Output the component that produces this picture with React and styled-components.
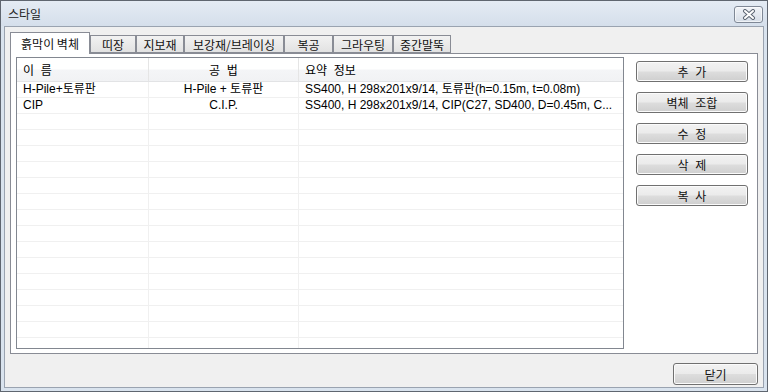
import React from "react";
import styled, { createGlobalStyle } from "styled-components";

const tabs = [
	{ label: "흙막이 벽체", width: 80 },
	{ label: "띠장", width: 46 },
	{ label: "지보재", width: 48 },
	{ label: "보강재/브레이싱", width: 100 },
	{ label: "복공", width: 49 },
	{ label: "그라우팅", width: 60 },
	{ label: "중간말뚝", width: 58 },
];

// the summary column is already cut in the source dialog
const rows = [
	["H-Pile+토류판", "H-Pile + 토류판", "SS400, H 298x201x9/14, 토류판(h=0.15m, t=0.08m)"],
	["CIP", "C.I.P.", "SS400, H 298x201x9/14, CIP(C27, SD400, D=0.45m, C..."],
];

const actions = ["추 가", "벽체 조합", "수 정", "삭 제", "복 사"];

const EMPTY_ROWS = 16;

function App() {
	const filled = [...rows];
	while (filled.length < rows.length + EMPTY_ROWS) filled.push(["", "", ""]);

	return (
		<>
			<GlobalStyle />
			<Window>
				<TitleBar>
					<Title>스타일</Title>
					<CloseX>
						<svg width="14" height="11" viewBox="0 0 14 11">
							<path d="M3 2 L11 9 M11 2 L3 9" stroke="#5d6673" strokeWidth="4" strokeLinecap="round" />
							<path d="M3 2 L11 9 M11 2 L3 9" stroke="#ffffff" strokeWidth="2" strokeLinecap="round" />
						</svg>
					</CloseX>
				</TitleBar>

				<Body>
					<TabStrip>
						{tabs.map((t, i) => (
							<Tab key={t.label} $w={t.width} $active={i === 0}>
								{t.label}
							</Tab>
						))}
					</TabStrip>

					<Panel>
						<ListView>
							<HeaderRow>
								<HeadCell $w={132}>이 름</HeadCell>
								<HeadCell $w={150} $center>
									공 법
								</HeadCell>
								<HeadCell $last>요약 정보</HeadCell>
							</HeaderRow>
							{filled.map((r, i) => (
								<Row key={i}>
									<Cell $w={132}>{r[0]}</Cell>
									<Cell $w={150} $center>
										{r[1]}
									</Cell>
									<Cell $last>{r[2]}</Cell>
								</Row>
							))}
						</ListView>

						<ButtonColumn>
							{actions.map((a) => (
								<Button key={a}>{a}</Button>
							))}
						</ButtonColumn>
					</Panel>

					<Footer>
						<Button $w={85} $h={22}>
							닫기
						</Button>
					</Footer>
				</Body>
			</Window>
		</>
	);
}

export default App;

const GlobalStyle = createGlobalStyle`
	html, body {
		margin: 0;
		padding: 0;
		background: #ffffff;
	}
	body {
		font-family: "Liberation Sans", "Noto Sans CJK KR", sans-serif;
		font-size: 12px;
		color: #000;
	}
`;

const Window = styled.div`
	width: 768px;
	height: 392px;
	box-sizing: border-box;
	border: 1px solid #5f6670;
	background: #d9e3ee;
	display: flex;
	flex-direction: column;
	overflow: hidden;
`;

const TitleBar = styled.div`
	height: 25px;
	flex-shrink: 0;
	display: flex;
	align-items: center;
	justify-content: space-between;
	padding: 0 4px 0 7px;
	background: linear-gradient(#e4ebf4, #d5dfeb);
`;

const Title = styled.span`
	font-family: "Noto Sans CJK KR", sans-serif;
	font-size: 12px;
	color: #222;
	margin-top: -1px;
`;

const CloseX = styled.div`
	width: 29px;
	height: 17px;
	box-sizing: border-box;
	margin-top: 1px;
	border: 1px solid #7f8896;
	border-radius: 3px;
	background: linear-gradient(#f1f4f8, #d6dde7);
	box-shadow: inset 0 0 0 1px rgba(255, 255, 255, 0.6);
	display: flex;
	align-items: center;
	justify-content: center;
`;

const Body = styled.div`
	flex: 1;
	margin: 0 3px 3px 3px;
	border: 1px solid #9aa3b0;
	background: #f0f0f0;
	display: flex;
	flex-direction: column;
	padding: 4px 5px 0 5px;
	min-height: 0;
`;

const TabStrip = styled.div`
	height: 22px;
	flex-shrink: 0;
	display: flex;
	align-items: flex-end;
	position: relative;
	z-index: 1;
`;

const Tab = styled.div`
	width: ${({ $w }) => $w}px;
	height: ${({ $active }) => ($active ? 22 : 18)}px;
	box-sizing: border-box;
	border: 1px solid #898c95;
	border-bottom: ${({ $active }) => ($active ? "none" : "1px solid #898c95")};
	margin-bottom: ${({ $active }) => ($active ? -1 : 0)}px;
	background: ${({ $active }) =>
		$active ? "#ffffff" : "linear-gradient(#f2f2f2, #e2e2e2)"};
	display: flex;
	align-items: center;
	justify-content: center;
	padding-top: ${({ $active }) => ($active ? 0 : 1)}px;
	white-space: nowrap;
	font-family: "Noto Sans CJK KR", sans-serif;
	font-size: 12px;
	color: #111;
`;

const Panel = styled.div`
	flex: 1;
	min-height: 0;
	border: 1px solid #898c95;
	background: #ffffff;
	display: flex;
	gap: 12px;
	padding: 3px 9px 4px 5px;
`;

const ListView = styled.div`
	width: 608px;
	box-sizing: border-box;
	border: 1px solid #828790;
	display: flex;
	flex-direction: column;
	overflow: hidden;
`;

const HeaderRow = styled.div`
	height: 24px;
	flex-shrink: 0;
	box-sizing: border-box;
	display: flex;
	border-bottom: 1px solid #e2e3e5;
	background: linear-gradient(#ffffff 0%, #ffffff 48%, #f4f5f7 52%, #f1f2f4 100%);
`;

const HeadCell = styled.div`
	${({ $w }) => ($w ? `width: ${$w}px;` : "flex: 1;")}
	box-sizing: border-box;
	border-right: ${({ $last }) => ($last ? "none" : "1px solid #e5e5e5")};
	display: flex;
	align-items: center;
	justify-content: ${({ $center }) => ($center ? "center" : "flex-start")};
	padding-left: ${({ $center }) => ($center ? 0 : 6)}px;
	font-family: "Noto Sans CJK KR", sans-serif;
	word-spacing: 4px;
	white-space: pre;
`;

const Row = styled.div`
	height: 16px;
	flex-shrink: 0;
	box-sizing: border-box;
	display: flex;
	border-bottom: 1px solid #f0f0f0;
`;

const Cell = styled.div`
	${({ $w }) => ($w ? `width: ${$w}px;` : "flex: 1; min-width: 0;")}
	box-sizing: border-box;
	border-right: ${({ $last }) => ($last ? "none" : "1px solid #f0f0f0")};
	line-height: 15px;
	text-align: ${({ $center }) => ($center ? "center" : "left")};
	padding-left: ${({ $center }) => ($center ? 0 : 6)}px;
	white-space: nowrap;
`;

const ButtonColumn = styled.div`
	display: flex;
	flex-direction: column;
	gap: 10px;
	padding-top: 4px;
`;

const Button = styled.div`
	width: ${({ $w }) => $w || 112}px;
	height: ${({ $h }) => $h || 21}px;
	box-sizing: border-box;
	border: 1px solid #707070;
	border-radius: 3px;
	background: linear-gradient(#f2f2f2 0%, #ebebeb 48%, #dddddd 52%, #cfcfcf 100%);
	box-shadow: inset 0 0 0 1px #fbfbfb;
	display: flex;
	align-items: center;
	justify-content: center;
	font-family: "Noto Sans CJK KR", sans-serif;
	font-size: 12px;
	word-spacing: 4px;
	white-space: pre;
	color: #111;
`;

const Footer = styled.div`
	height: 33px;
	flex-shrink: 0;
	display: flex;
	justify-content: flex-end;
	align-items: flex-start;
	padding-top: 9px;
	box-sizing: border-box;
`;
